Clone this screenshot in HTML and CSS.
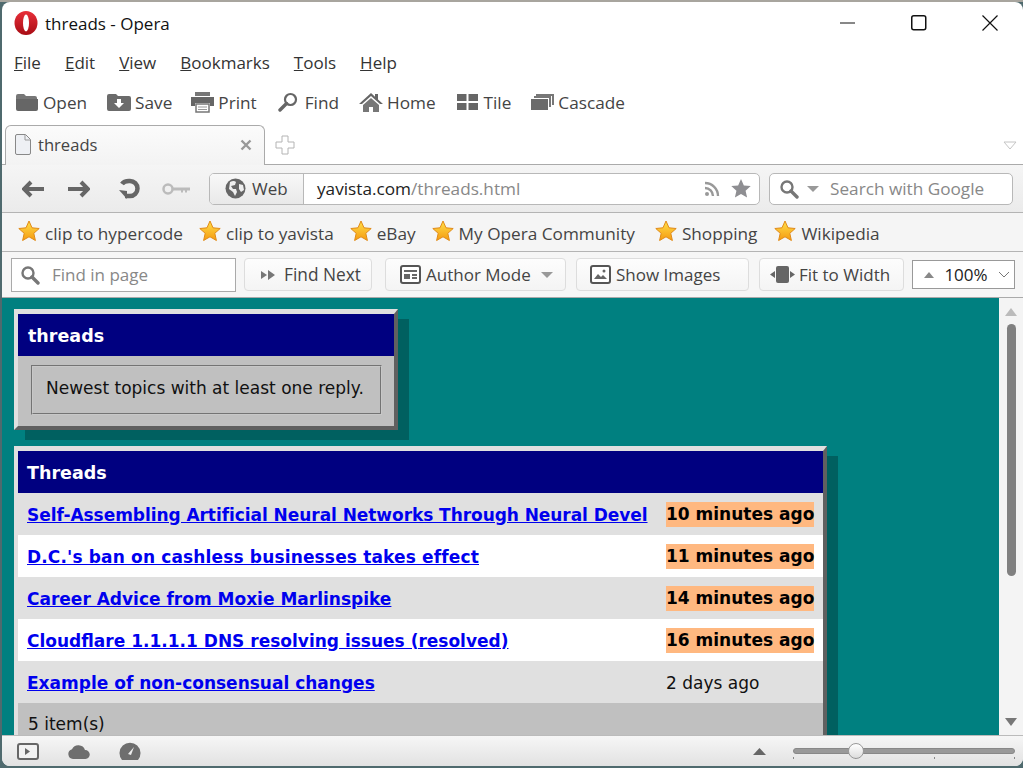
FILE: index.html
```html
<!DOCTYPE html>
<html>
<head>
	<meta charset="utf-8">
	<title>threads - Opera</title>
	<link rel="stylesheet" href="styles.css">
</head>
<body>
<svg class="defs" width="0" height="0">
	<defs>
		<linearGradient id="gold" x1="0" y1="0" x2="0" y2="1">
			<stop offset="0" stop-color="#ffe04a"/>
			<stop offset="1" stop-color="#f59a10"/>
		</linearGradient>
		<linearGradient id="red" x1="0" y1="0" x2="0" y2="1">
			<stop offset="0" stop-color="#e8303a"/>
			<stop offset="1" stop-color="#a80c14"/>
		</linearGradient>
		<symbol id="star" viewBox="0 0 22 22">
			<path d="M11 1l3 6.800 7.200.7-5.400 4.800 1.600 7.200L11 16.800l-6.400 3.700 1.600-7.200L.8 8.500l7.200-.7z" fill="url(#gold)" stroke="#e08a18" stroke-width="1"/>
		</symbol>
		<symbol id="lens" viewBox="0 0 20 20">
			<circle cx="8" cy="8" r="5.500" fill="none" stroke="#777" stroke-width="2.400"/>
			<path d="M12 12l6 6" stroke="#777" stroke-width="3.400" stroke-linecap="round"/>
		</symbol>
	</defs>
</svg>
<div class="window">
	<div class="titlebar">
		<svg class="logo" width="24" height="24" viewBox="0 0 24 24"><ellipse cx="12" cy="12" rx="11.500" ry="12" fill="url(#red)"/><ellipse cx="12" cy="12" rx="3" ry="8.500" fill="#fff"/></svg>
		<span class="app-title">threads - Opera</span>
		<div class="win-btns">
			<svg width="16" height="16" viewBox="0 0 16 16"><path d="M0 8h15" stroke="#111" stroke-width="1"/></svg>
			<svg width="16" height="16" viewBox="0 0 16 16"><rect x=".75" y=".75" width="14" height="14" rx="2" fill="none" stroke="#111" stroke-width="1.500"/></svg>
			<svg width="16" height="16" viewBox="0 0 16 16"><path d="M.5.500l15 15M15.500.500l-15 15" stroke="#111" stroke-width="1.200"/></svg>
		</div>
	</div>

	<div class="menubar">
		<span><u>F</u>ile</span>
		<span><u>E</u>dit</span>
		<span><u>V</u>iew</span>
		<span><u>B</u>ookmarks</span>
		<span><u>T</u>ools</span>
		<span><u>H</u>elp</span>
	</div>

	<div class="toolbar">
		<span class="tool"><svg width="24" height="20" viewBox="0 0 24 20"><path d="M1 4q0-2 2-2h6l2 2h9q2 0 2 2v1H1z" fill="#777"/><path d="M1 7h22v10q0 2-2 2H3q-2 0-2-2z" fill="#666"/></svg>Open</span>
		<span class="tool"><svg width="24" height="20" viewBox="0 0 24 20"><path d="M0 4q0-2 2-2h7l2 2h11q2 0 2 2v11q0 2-2 2H2q-2 0-2-2z" fill="#6b6b6b"/><path d="M10 7h4v4h3l-5 5-5-5h3z" fill="#fff"/></svg>Save</span>
		<span class="tool print"><svg width="25" height="22" viewBox="0 0 25 22"><path d="M5 1h15v4H5z" fill="#777"/><path d="M1 6h23v9h-4v-3H5v3H1z" fill="#666"/><path d="M6 13h13v8H6z" fill="#fff" stroke="#777" stroke-width="1.500"/><path d="M8 16h9M8 18.500h9" stroke="#999"/></svg>Print</span>
		<span class="tool find"><svg width="20" height="20" viewBox="0 0 20 20"><circle cx="12.500" cy="7.500" r="5.500" fill="none" stroke="#666" stroke-width="2.200"/><path d="M8.500 11.500L2 18" stroke="#666" stroke-width="3.400" stroke-linecap="round"/></svg>Find</span>
		<span class="tool"><svg width="24" height="20" viewBox="0 0 24 20"><path d="M12 1L0 12h3l9-8 9 8h3l-5-4.600V2h-3v2.700z" fill="#666"/><path d="M4 13l8-7 8 7v7h-6v-5h-4v5H4z" fill="#777"/></svg>Home</span>
		<span class="tool tile"><svg width="21" height="16" viewBox="0 0 21 16"><path d="M0 0h9.500v7H0zM11.500 0H21v7h-9.500zM0 9h9.500v7H0zM11.500 9H21v7h-9.500z" fill="#666"/></svg>Tile</span>
		<span class="tool"><svg width="23" height="18" viewBox="0 0 23 18"><path d="M5 3V1h18v11h-2V3zM3 5V3h17v11h-2V5z" fill="#777"/><path d="M0 6h17v11H0z" fill="#6b6b6b"/></svg>Cascade</span>
	</div>

	<div class="tabbar">
		<div class="tab">
			<svg width="18" height="21" viewBox="0 0 18 21"><path d="M1.500 2q0-1.500 1.500-1.500h8.500l5 5V19q0 1.500-1.500 1.500H3q-1.500 0-1.500-1.500z" fill="#eef0f4" stroke="#888"/><path d="M11 1v5h5" fill="none" stroke="#999"/></svg>
			<span class="tab-title">threads</span>
			<svg class="tab-close" width="12" height="12" viewBox="0 0 12 12"><path d="M1.500 1.500l9 9M10.500 1.500l-9 9" stroke="#999" stroke-width="2.400"/></svg>
		</div>
		<svg class="tab-add" width="20" height="20" viewBox="0 0 20 20"><path d="M7 1h6v6h6v6h-6v6H7v-6H1V7h6z" fill="#fff" stroke="#b4b4b4"/></svg>
		<svg class="tab-list" width="14" height="9" viewBox="0 0 14 9"><path d="M1 1h12L7 8z" fill="#fff" stroke="#c4c4c4"/></svg>
	</div>

	<div class="addressbar">
		<svg class="nav" width="22" height="18" viewBox="0 0 22 18"><path d="M9 2L2 9l7 7M3 9h19" fill="none" stroke="#666" stroke-width="4"/></svg>
		<svg class="nav forward" width="22" height="18" viewBox="0 0 22 18"><path d="M13 2l7 7-7 7M19 9H0" fill="none" stroke="#666" stroke-width="4"/></svg>
		<svg class="nav reload" width="22" height="22" viewBox="0 0 22 22"><path d="M4 6q2-3 7-3h1a7.500 7.500 0 0 1 0 15H7" fill="none" stroke="#666" stroke-width="4.500"/><path d="M1 12l8 1v8z" fill="#666"/></svg>
		<svg class="nav key" width="29" height="12" viewBox="0 0 29 12"><circle cx="6" cy="6" r="4.500" fill="none" stroke="#bbb" stroke-width="2.500"/><path d="M10 4.500h18v3h-3v2h-2v-2h-2v2h-2v-2h-9z" fill="#bbb"/></svg>
		<div class="address">
			<div class="site">
				<svg width="21" height="21" viewBox="0 0 21 21"><circle cx="10.500" cy="10.500" r="10" fill="#666"/><path d="M5 4q4-2 6 0l-1 3-4 1 2 3 3 0 1 3-2 4-2-4-4-3zM14 6l4 1 1 5-3 2-2-3z" fill="#eee"/></svg>
				<span>Web</span>
			</div>
			<div class="url">
				<span class="host">yavista.com</span><span class="path">/threads.html</span>
				<svg class="rss" width="18" height="16" viewBox="0 0 18 16"><circle cx="3" cy="13" r="2" fill="#999"/><path d="M1 7a8 8 0 0 1 8 8M1 2a13 13 0 0 1 13 13" fill="none" stroke="#999" stroke-width="2.400"/></svg>
				<svg width="22" height="21" viewBox="0 0 22 22"><path d="M11 1l3 6.800 7.200.7-5.400 4.800 1.600 7.200L11 16.800l-6.400 3.700 1.600-7.200L.8 8.500l7.200-.7z" fill="#8e8e92"/></svg>
			</div>
		</div>
		<div class="search">
			<svg width="20" height="20"><use href="#lens"/></svg>
			<svg class="caret" width="12" height="6" viewBox="0 0 12 6"><path d="M0 0h12L6 6z" fill="#999"/></svg>
			<span>Search with Google</span>
		</div>
	</div>

	<div class="bookmarks">
		<span class="mark"><svg width="22" height="22"><use href="#star"/></svg>clip to hypercode</span>
		<span class="mark"><svg width="22" height="22"><use href="#star"/></svg>clip to yavista</span>
		<span class="mark"><svg width="22" height="22"><use href="#star"/></svg>eBay</span>
		<span class="mark"><svg width="22" height="22"><use href="#star"/></svg>My Opera Community</span>
		<span class="mark shop"><svg width="22" height="22"><use href="#star"/></svg>Shopping</span>
		<span class="mark wiki"><svg width="22" height="22"><use href="#star"/></svg>Wikipedia</span>
	</div>

	<div class="findbar">
		<div class="find-input">
			<svg width="20" height="20"><use href="#lens"/></svg>
			<span>Find in page</span>
		</div>
		<div class="fbtn next"><svg width="14" height="12" viewBox="0 0 14 12"><path d="M0 2l6 4-6 4zM7 1l7 5-7 5z" fill="#777"/></svg>Find Next</div>
		<div class="fbtn author">
			<svg width="21" height="19" viewBox="0 0 21 19"><rect x="1" y="1" width="19" height="17" rx="2" fill="#fff" stroke="#555" stroke-width="2"/><path d="M4 5h13v2H4zM4 9h6v5H4zM12 9h5v2h-5zM12 12h5v2h-5z" fill="#666"/></svg>
			Author Mode
			<svg class="caret" width="12" height="6" viewBox="0 0 12 6"><path d="M0 0h12L6 6z" fill="#999"/></svg>
		</div>
		<div class="fbtn images"><svg width="21" height="19" viewBox="0 0 21 19"><rect x="1" y="1" width="19" height="17" rx="2" fill="#fff" stroke="#555" stroke-width="2"/><path d="M4 14l4-5 3 3 2-2 4 4z" fill="#666"/><circle cx="14" cy="6" r="1.500" fill="#666"/></svg>Show Images</div>
		<div class="fbtn fit"><svg width="25" height="17" viewBox="0 0 25 17"><rect x="6" y="0" width="13" height="17" rx="2" fill="#666"/><path d="M5 5v7L0 8.500zM20 5v7l5-3.500z" fill="#666"/></svg>Fit to Width</div>
		<div class="zoom">
			<svg width="10" height="6" viewBox="0 0 10 6"><path d="M0 6h10L5 0z" fill="#888"/></svg>
			<span>100%</span>
			<svg width="12" height="7" viewBox="0 0 12 7"><path d="M1 1l5 5 5-5" fill="none" stroke="#777"/></svg>
		</div>
	</div>

	<div class="viewport">
		<div class="page">
			<div class="box intro">
				<h2 class="box-head">threads</h2>
				<div class="box-body">
					<p class="note">Newest topics with at least one reply.</p>
				</div>
			</div>
			<div class="box threads">
				<h2 class="box-head">Threads</h2>
				<div class="row"><a class="tight" href="#">Self-Assembling Artificial Neural Networks Through Neural Devel</a><span class="time new">10 minutes ago</span></div>
				<div class="row alt"><a class="wide" href="#">D.C.'s ban on cashless businesses takes effect</a><span class="time new">11 minutes ago</span></div>
				<div class="row"><a href="#">Career Advice from Moxie Marlinspike</a><span class="time new">14 minutes ago</span></div>
				<div class="row alt"><a href="#">Cloudflare 1.1.1.1 DNS resolving issues (resolved)</a><span class="time new">16 minutes ago</span></div>
				<div class="row"><a href="#">Example of non-consensual changes</a><span class="time">2 days ago</span></div>
				<div class="foot">5 item(s)</div>
			</div>
		</div>
		<div class="scrollbar">
			<svg width="12" height="8" viewBox="0 0 12 8"><path d="M0 8h12L6 0z" fill="#bbb"/></svg>
			<div class="thumb"></div>
			<svg class="down" width="12" height="8" viewBox="0 0 12 8"><path d="M0 0h12L6 8z" fill="#777"/></svg>
		</div>
	</div>

	<div class="statusbar">
		<svg width="22" height="17" viewBox="0 0 22 17"><rect x="1" y="1" width="20" height="15" rx="2" fill="#f2f2f2" stroke="#666" stroke-width="2"/><path d="M8 5l5 3.500L8 12z" fill="#666"/></svg>
		<svg class="cloud" width="22" height="16" viewBox="0 0 22 16"><path d="M5 16a5 5 0 0 1-1-9.800 7 7 0 0 1 13 .8A4.500 4.500 0 0 1 17.500 16z" fill="#6e6e6e"/></svg>
		<svg class="gauge" width="22" height="18" viewBox="0 0 22 18"><path d="M3 18a10.500 10.500 0 1 1 16 0z" fill="#6e6e6e"/><path d="M9 12l6-7-3 8z" fill="#eee"/></svg>
		<svg class="up" width="13" height="7" viewBox="0 0 13 7"><path d="M0 7h13L6.500 0z" fill="#666"/></svg>
		<div class="slider">
			<div class="track"></div>
			<div class="ticks"><i></i><i></i><i></i><i></i></div>
			<div class="knob"></div>
		</div>
	</div>
</div>
</body>
</html>
```

FILE: styles.css
```css
html, body{
	margin: 0;
	height: 100%;
	overflow: hidden;
}
body{
	background: #4f6a6e;
	border-top: 2px solid #a8a59e;
	box-sizing: border-box;
	font-family: "Open Sans", "Noto Sans", sans-serif;
	font-size: 17px;
	color: #444;
}
svg{
	display: block;
	flex: none;
}
.defs{
	position: absolute;
}
.window{
	margin-left: 2px;
	height: 764px;
	display: flex;
	flex-direction: column;
	background: #fff;
	border-radius: 8px;
	overflow: hidden;
}

/* title and menu */
.titlebar{
	height: 42px;
	display: flex;
	align-items: center;
	padding-left: 12px;
	box-sizing: border-box;
	flex: none;
}
.app-title{
	margin-left: 7px;
	color: #111;
}
.win-btns{
	margin-left: auto;
	display: flex;
	gap: 55px;
	padding-right: 25px;
}
.menubar{
	height: 39px;
	display: flex;
	align-items: center;
	gap: 24px;
	padding: 0 0 2px 12px;
	box-sizing: border-box;
	color: #333;
	flex: none;
}
.toolbar{
	height: 40px;
	display: flex;
	align-items: center;
	gap: 20px;
	padding: 0 0 2px 13px;
	box-sizing: border-box;
	font-size: 17.2px;
	flex: none;
}
.tool{
	display: flex;
	align-items: center;
	gap: 4px;
}
.print{
	margin-left: -2px;
	gap: 3px;
}
.find{
	margin-left: 1px;
	gap: 7px;
}
.tile{
	gap: 6px;
}
.tile svg{
	margin-left: 1px;
}

/* tabs */
.tabbar{
	height: 42px;
	display: flex;
	align-items: flex-end;
	padding-left: 3px;
	border-bottom: 1px solid #aaa;
	box-sizing: border-box;
	flex: none;
}
.tab{
	width: 260px;
	height: 40px;
	margin-bottom: -1px;
	display: flex;
	align-items: center;
	padding: 0 12px 2px 8px;
	box-sizing: border-box;
	border: 1px solid #aaa;
	border-bottom: 0;
	border-radius: 6px 6px 0 0;
	background: linear-gradient(#fbfbfb, #f3f3f3);
	font-size: 16.6px;
}
.tab-title{
	margin-left: 6px;
}
.tab-close{
	margin-left: auto;
}
.tab-add{
	margin: 0 0 9px 10px;
}
.tab-list{
	margin: 0 6px 14px auto;
}

/* address bar */
.addressbar{
	height: 48px;
	display: flex;
	align-items: center;
	padding-left: 20px;
	background: linear-gradient(#f5f5f5, #ebebeb);
	border-bottom: 1px solid #b4b4b4;
	box-sizing: border-box;
	flex: none;
}
.nav{
	margin-right: 24px;
}
.forward{
	margin-right: 28px;
}
.reload{
	margin-right: 22px;
}
.key{
	margin-right: 18px;
}
.address{
	width: 551px;
	height: 32px;
	display: flex;
	border: 1px solid #b8b8b8;
	border-radius: 5px;
	box-sizing: border-box;
	overflow: hidden;
	background: #fff;
}
.site{
	width: 94px;
	display: flex;
	align-items: center;
	gap: 6px;
	padding-left: 15px;
	box-sizing: border-box;
	background: linear-gradient(#f8f8f8, #e9e9e9);
	border-right: 1px solid #b8b8b8;
}
.url{
	flex: 1;
	display: flex;
	align-items: center;
	padding: 0 7px 0 13px;
	font-size: 17.2px;
}
.host{
	color: #222;
}
.path{
	color: #888;
}
.rss{
	margin-left: auto;
	margin-right: 8px;
}
.search{
	width: 244px;
	height: 32px;
	margin-left: 9px;
	display: flex;
	align-items: center;
	padding-left: 9px;
	box-sizing: border-box;
	border: 1px solid #b8b8b8;
	border-radius: 5px;
	background: #fff;
	color: #888;
	font-size: 17.2px;
}
.search .caret{
	margin: 0 11px 0 8px;
}

/* bookmarks */
.bookmarks{
	height: 39px;
	display: flex;
	align-items: center;
	gap: 16px;
	padding: 2px 0 0 16px;
	background: #f5f5f5;
	border-bottom: 1px solid #b4b4b4;
	box-sizing: border-box;
	font-size: 17.2px;
	flex: none;
}
.mark{
	display: flex;
	align-items: center;
	gap: 5px;
}
.mark svg{
	margin-top: -4px;
}
.shop{
	margin-left: 4px;
}
.wiki{
	margin-left: 1px;
}

/* find bar */
.findbar{
	height: 46px;
	display: flex;
	align-items: center;
	padding-left: 9px;
	background: #f6f6f6;
	border-bottom: 1px solid #aaa;
	box-sizing: border-box;
	flex: none;
}
.find-input{
	width: 225px;
	height: 34px;
	display: flex;
	align-items: center;
	gap: 12px;
	padding-left: 8px;
	box-sizing: border-box;
	background: #fff;
	border: 1px solid #aaa;
	color: #888;
}
.fbtn{
	height: 33px;
	display: flex;
	align-items: center;
	padding-left: 14px;
	box-sizing: border-box;
	border: 1px solid #ddd;
	border-radius: 4px;
	background: linear-gradient(#fdfdfd, #f4f4f4);
	gap: 5px;
}
.next{
	width: 128px;
	margin-left: 8px;
	padding-left: 16px;
	gap: 9px;
	font-size: 17.3px;
}
.author{
	width: 181px;
	margin-left: 13px;
}
.author .caret{
	margin-left: 5px;
}
.images{
	width: 173px;
	margin-left: 10px;
	padding-left: 13px;
}
.fit{
	width: 145px;
	margin-left: 10px;
	padding-left: 10px;
	gap: 4px;
}
.zoom{
	width: 103px;
	height: 29px;
	margin-left: 8px;
	display: flex;
	align-items: center;
	justify-content: space-between;
	padding: 0 4px 0 11px;
	box-sizing: border-box;
	background: #fff;
	border: 1px solid #999;
	color: #222;
}

/* page area */
.viewport{
	flex: 1;
	min-height: 0;
	display: flex;
	overflow: hidden;
}
.page{
	flex: 1;
	background: #008080;
	padding: 11px 0 0 12px;
	overflow: hidden;
	font-family: "DejaVu Sans", sans-serif;
	font-size: 17px;
	color: #111;
}
.box{
	box-sizing: border-box;
	border: 4px solid;
	border-top-width: 5px;
	border-color: #e0e0e0 #606060 #606060 #e0e0e0;
	background: #c0c0c0;
	box-shadow: 11px 10px 0 #006060;
}
.box-head{
	margin: 0;
	height: 42px;
	line-height: 44px;
	padding-left: 10px;
	background: #000080;
	color: #fff;
	font-size: 17.5px;
	font-weight: bold;
}
.intro{
	width: 384px;
}
.box-body{
	padding: 9px 12px 11px 13px;
}
.note{
	margin: 0;
	height: 50px;
	line-height: 42px;
	padding-left: 13px;
	box-sizing: border-box;
	border: 2px groove #c8c8c8;
}
.threads{
	width: 813px;
	margin-top: 16px;
}
.threads .box-head{
	padding-left: 9px;
}
.row{
	height: 42px;
	display: flex;
	align-items: center;
	padding: 1px 9px 0 9px;
	box-sizing: border-box;
	background: #e0e0e0;
	font-weight: bold;
}
.alt{
	background: #fff;
}
.row a{
	width: 622px;
	margin-right: 17px;
	flex: none;
	overflow: hidden;
	white-space: nowrap;
	color: #0000ee;
}
.row .tight{
	letter-spacing: -0.06px;
}
.row .wide{
	letter-spacing: 0.15px;
}
.time{
	flex: 1;
	font-weight: normal;
	white-space: nowrap;
}
.new{
	font-weight: bold;
	background: #ffb880;
	line-height: 25px;
	color: #000;
}
.foot{
	height: 42px;
	line-height: 42px;
	padding-left: 10px;
}
.scrollbar{
	width: 24px;
	background: #f4f4f4;
	display: flex;
	flex-direction: column;
	align-items: center;
	padding-top: 10px;
	box-sizing: border-box;
}
.thumb{
	width: 9px;
	height: 252px;
	margin-top: 8px;
	border-radius: 5px;
	background: #808080;
}
.down{
	margin-top: auto;
	margin-bottom: 9px;
}

/* status bar */
.statusbar{
	height: 31px;
	display: flex;
	align-items: center;
	padding-left: 15px;
	background: linear-gradient(#f6f6f6, #e2e2e2);
	border-top: 1px solid #bbb;
	box-sizing: border-box;
	flex: none;
}
.cloud{
	margin-left: 29px;
}
.gauge{
	margin-left: 29px;
}
.up{
	margin-left: 612px;
}
.slider{
	width: 222px;
	height: 20px;
	margin-left: 27px;
	position: relative;
}
.track{
	height: 6px;
	margin-top: 7px;
	border-radius: 3px;
	background: #999;
	border: 1px solid #888;
	box-sizing: border-box;
}
.ticks{
	display: grid;
	grid-template-columns: 62px 79px 80px 1px;
	margin-top: 3px;
}
.ticks i{
	width: 1px;
	height: 2px;
	background: #888;
}
.knob{
	position: absolute;
	left: 55px;
	top: 2px;
	width: 16px;
	height: 16px;
	border-radius: 50%;
	box-sizing: border-box;
	border: 1px solid #999;
	background: linear-gradient(#fff, #ddd);
}
```
